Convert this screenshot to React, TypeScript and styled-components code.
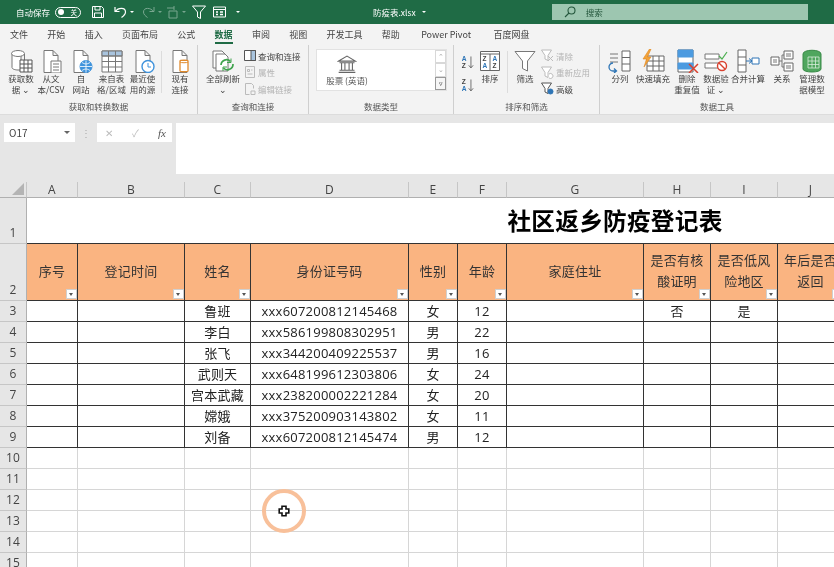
import React, { FC, ReactNode } from 'react';
import styled, { createGlobalStyle } from 'styled-components';

const FONT = `"Noto Sans CJK SC", "Noto Sans", sans-serif`;
const CELL_FONT = `"Open Sans", "Noto Sans CJK SC", sans-serif`;

const GlobalStyle = createGlobalStyle`
  html, body {
    margin: 0;
    padding: 0;
    background: #fff;
  }
  body {
    font-family: ${FONT};
  }
`;

const COLUMNS = [
  { name: 'A', width: 51 },
  { name: 'B', width: 107 },
  { name: 'C', width: 66 },
  { name: 'D', width: 158 },
  { name: 'E', width: 49 },
  { name: 'F', width: 49 },
  { name: 'G', width: 137 },
  { name: 'H', width: 67 },
  { name: 'I', width: 67 },
  { name: 'J', width: 66 },
];

const HEADERS = [
  '序号',
  '登记时间',
  '姓名',
  '身份证号码',
  '性别',
  '年龄',
  '家庭住址',
  '是否有核\n酸证明',
  '是否低风\n险地区',
  '年后是否\n返回',
];

const PEOPLE = [
  ['', '', '鲁班', 'xxx607200812145468', '女', '12', '', '否', '是', ''],
  ['', '', '李白', 'xxx586199808302951', '男', '22', '', '', '', ''],
  ['', '', '张飞', 'xxx344200409225537', '男', '16', '', '', '', ''],
  ['', '', '武则天', 'xxx648199612303806', '女', '24', '', '', '', ''],
  ['', '', '宫本武藏', 'xxx238200002221284', '女', '20', '', '', '', ''],
  ['', '', '嫦娥', 'xxx375200903143802', '女', '11', '', '', '', ''],
  ['', '', '刘备', 'xxx607200812145474', '男', '12', '', '', '', ''],
];

const TABS = ['文件', '开始', '插入', '页面布局', '公式', '数据', '审阅', '视图', '开发工具', '帮助', 'Power Pivot', '百度网盘'];

const Icon: FC<{ size?: number; children: ReactNode }> = ({ size = 24, children }) => (
  <svg width={size} height={size} viewBox="0 0 24 24" fill="none" stroke="#777" strokeWidth="1">
    {children}
  </svg>
);

const Doc = () => <path d="M5 1.500h9l5 5v17H5z M14 1.500v5h5" fill="#fff" />;

const DatabaseIcon = () => (
  <Icon>
    <path d="M3 4.500v14c0 1.500 3 2.500 6 2.500h3V4.500" fill="#fff" />
    <ellipse cx="9" cy="4.500" rx="6.500" ry="3" fill="#fff" />
    <path d="M15.500 5v6" />
    <path d="M11 11h12v12H11z" fill="#fff" stroke="#555" />
    <path d="M11 15h12M11 19h12M15 11v12M19 11v12" stroke="#555" />
  </Icon>
);

const TextFileIcon = () => (
  <Icon>
    <Doc />
    <path d="M12 12h10v12H12z" fill="#fff" />
    <path d="M14 15h6M14 18h6M14 21h6" />
  </Icon>
);

const WebIcon = () => (
  <Icon>
    <Doc />
    <circle cx="17" cy="17.500" r="6" fill="#3F93DC" stroke="#3F93DC" />
    <path d="M11 17.500h12M17 11.500v12M13 13.500c3 2 5 2 8 0M13 21.500c3-2 5-2 8 0" stroke="#fff" strokeWidth="0.800" />
  </Icon>
);

const TableIcon = () => (
  <Icon>
    <path d="M2 2h20v21H2z" fill="#fff" />
    <path d="M2 2h20v5H2z" fill="#A9C4DE" />
    <path d="M2 7h20M2 12.500h20M2 18h20M8.500 2v21M15.500 2v21" />
  </Icon>
);

const RecentIcon = () => (
  <Icon>
    <Doc />
    <circle cx="17" cy="17.500" r="6" fill="#fff" stroke="#3F93DC" strokeWidth="1.400" />
    <path d="M17 14v4h3" stroke="#3F93DC" />
  </Icon>
);

const ExistingIcon = () => (
  <Icon>
    <Doc />
    <path d="M12 12c0-1 8-1 8 0v10c0 1-8 1-8 0z" fill="#fff" stroke="#E08A2C" strokeWidth="1.300" />
    <path d="M12 13c1 1 7 1 8 0" stroke="#E08A2C" />
  </Icon>
);

const RefreshIcon = () => (
  <Icon>
    <path d="M2 2h9l3 3v14H2z" fill="#fff" />
    <path d="M5 5h9l3 3v14H5z" fill="#fff" />
    <path d="M10 16a5.500 5.500 0 0 1 9.500-3.500M22 15a5.500 5.500 0 0 1-9.500 4" stroke="#3FA34D" strokeWidth="1.700" />
    <path d="M20 9.500v4h-4M12 22v-4h4" stroke="#3FA34D" />
  </Icon>
);

const BankIcon = () => (
  <svg width="20" height="20" viewBox="0 0 24 24" fill="none" stroke="#666" strokeWidth="1.300">
    <path d="M2 8.500L12 2.500l10 6zM3 10.500h18M5.500 11v8M9.500 11v8M14.500 11v8M18.500 11v8M3 19.500h18M2 22h20" />
  </svg>
);

const SortLettersIcon: FC<{ flip?: boolean }> = ({ flip }) => (
  <svg width="14" height="14" viewBox="0 0 17 19" fill="none">
    <text x="0" y="8" fontSize="9" fontFamily="Liberation Sans, sans-serif" fontWeight="700" fill={flip ? '#444' : '#2E75B6'}>
      {flip ? 'Z' : 'A'}
    </text>
    <text x="0" y="18" fontSize="9" fontFamily="Liberation Sans, sans-serif" fontWeight="700" fill={flip ? '#2E75B6' : '#444'}>
      {flip ? 'A' : 'Z'}
    </text>
    <path d="M12.500 2v15M9.500 14l3 3.500 3-3.500" stroke="#444" />
  </svg>
);

const SortIcon = () => (
  <svg width="24" height="24" viewBox="0 0 24 24" fill="none" stroke="#666">
    <path d="M2.500 2.500h19v19h-19zM2.500 5h19M12 5v16.500" fill="#fff" />
    <text x="4.500" y="12" fontSize="6.500" fontWeight="700" fontFamily="Liberation Sans, sans-serif" stroke="none" fill="#444">Z</text>
    <text x="4.500" y="19" fontSize="6.500" fontWeight="700" fontFamily="Liberation Sans, sans-serif" stroke="none" fill="#2E75B6">A</text>
    <text x="14.500" y="12" fontSize="6.500" fontWeight="700" fontFamily="Liberation Sans, sans-serif" stroke="none" fill="#2E75B6">A</text>
    <text x="14.500" y="19" fontSize="6.500" fontWeight="700" fontFamily="Liberation Sans, sans-serif" stroke="none" fill="#444">Z</text>
  </svg>
);

const FunnelIcon = () => (
  <svg width="24" height="24" viewBox="0 0 24 24" fill="#fff" stroke="#777">
    <path d="M2 2.500h20L14.500 12v10l-5-2.500V12z" />
  </svg>
);

const SmallFunnel: FC<{ color?: string; children?: ReactNode }> = ({ color = '#bbb', children }) => (
  <svg width="13" height="13" viewBox="0 0 13 13" fill="#fff" stroke={color}>
    <path d="M.5 1h10L7 6.500v5l-3-1.500V6.500z" />
    {children}
  </svg>
);

const SplitIcon = () => (
  <Icon>
    <path d="M2 5h8M2 9h8M2 13h8" />
    <path d="M14 2h8v20h-8zM14 8.500h8M14 15h8" fill="#fff" stroke="#666" />
    <path d="M5 14a4 4 0 0 0 0 8h3M6 19.500l2.500 2.500-2.500 2" stroke="#2E75B6" strokeWidth="1.300" />
  </Icon>
);

const FlashFillIcon = () => (
  <Icon>
    <path d="M6 7h17v15H6zM6 12h17M6 17h17M12 7v15M18 7v15" fill="#fff" stroke="#666" />
    <path d="M8.500 0L2 10h3.500L3 18l7-10H6.500L10 0z" fill="#F2A33A" stroke="#E0861E" strokeWidth="0.600" />
  </Icon>
);

const RemoveDupIcon = () => (
  <Icon>
    <path d="M3 1h15v22H3z" fill="#fff" stroke="#666" />
    <path d="M3 1h15v7H3zM3 14h15v6H3z" fill="#4C9BE0" stroke="#4C9BE0" />
    <path d="M14 15l9 9M23 15l-9 9" stroke="#D9412F" strokeWidth="1.500" />
  </Icon>
);

const ValidateIcon = () => (
  <Icon>
    <path d="M1 5h14v5H1zM1 14h14v5H1z" fill="#fff" />
    <path d="M15 7l3 3 5-7" stroke="#4CAF50" strokeWidth="1.200" />
    <circle cx="18" cy="17" r="4.500" fill="#fff" stroke="#D9412F" strokeWidth="1.400" />
    <path d="M15 14l6 6" stroke="#D9412F" strokeWidth="1.400" />
  </Icon>
);

const ConsolidateIcon = () => (
  <Icon>
    <path d="M2 1h8v22H2zM2 8h8M2 16h8" fill="#fff" stroke="#666" />
    <path d="M10 12h6M13 9.500l3 2.500-3 2.500" stroke="#2E75B6" />
    <path d="M16 9h7v6h-7z" fill="#fff" stroke="#2E75B6" />
  </Icon>
);

const RelationIcon = () => (
  <Icon>
    <path d="M1 8h8v8H1zM14 2h9v8h-9zM14 14h9v8h-9z" fill="#fff" stroke="#666" />
    <path d="M3 11h4M3 13h4M16 5h5M16 7h5M16 17h5M16 19h5M9 12h3V6h2M12 12v6h2" />
  </Icon>
);

const DataModelIcon = () => (
  <Icon>
    <path d="M3 5c0-5 18-5 18 0v15c0 4-18 4-18 0z" fill="#4FA65E" stroke="#3A8A48" />
    <path d="M8 8h11v11H8zM8 12h11M8 15.500h11M12 8v11M15.500 8v11" stroke="#D8ECDB" strokeWidth="0.800" />
  </Icon>
);

const BIG_CONNECT = [
  { icon: <DatabaseIcon />, label: '获取数\n据 ⌄', width: 30 },
  { icon: <TextFileIcon />, label: '从文\n本/CSV', width: 30 },
  { icon: <WebIcon />, label: '自\n网站', width: 30 },
  { icon: <TableIcon />, label: '来自表\n格/区域', width: 31 },
  { icon: <RecentIcon />, label: '最近使\n用的源', width: 31 },
];

const TOOLS = [
  { icon: <SplitIcon />, label: '分列', width: 30 },
  { icon: <FlashFillIcon />, label: '快速填充', width: 36 },
  { icon: <RemoveDupIcon />, label: '删除\n重复值', width: 32 },
  { icon: <ValidateIcon />, label: '数据验\n证 ⌄', width: 26 },
  { icon: <ConsolidateIcon />, label: '合并计算', width: 38 },
  { icon: <RelationIcon />, label: '关系', width: 30 },
  { icon: <DataModelIcon />, label: '管理数\n据模型', width: 30 },
];

const App: FC = () => {
  const gridRows = Array.from({ length: 6 }, (_, i) => i + 10);

  return (
    <Page>
      <GlobalStyle />
      <TitleBar>
        <AutoSave>自动保存</AutoSave>
        <Toggle>
          <ToggleDot />
          <span>关</span>
        </Toggle>
        <QuickIcon $left={11}>
          <svg width="12" height="12" viewBox="0 0 12 12" fill="none" stroke="#fff">
            <path d="M.5.5h9l2 2v9H.5zM3 .5v3.500h5V.5M2.500 11.500V7h7v4.500" />
          </svg>
        </QuickIcon>
        <QuickIcon $left={10}>
          <svg width="13" height="12" viewBox="0 0 13 12" fill="none" stroke="#fff" strokeWidth="1.200">
            <path d="M1 1v4.500h4.500M1.500 5.500C4 1.500 11.500 1 11.500 6c0 2.500-2 4-4 5.500" />
          </svg>
        </QuickIcon>
        <Caret />
        <QuickIcon $left={8} $dim>
          <svg width="13" height="12" viewBox="0 0 13 12" fill="none" stroke="#fff">
            <path d="M12 1v4.500H7.500M11.500 5.500C9 1.500 1.500 1 1.500 6c0 2.500 2 4 4 5.500" />
          </svg>
        </QuickIcon>
        <Caret $dim />
        <QuickIcon $left={3} $dim>
          <svg width="14" height="14" viewBox="0 0 14 14" fill="none" stroke="#fff">
            <path d="M2 3h7M9 1v4M4 6h8v7H4z" />
          </svg>
        </QuickIcon>
        <Caret $dim />
        <QuickIcon $left={6}>
          <svg width="14" height="14" viewBox="0 0 14 14" fill="none" stroke="#fff">
            <path d="M.5 1h13L8.500 7v6.500l-3-1.500V7z" />
          </svg>
        </QuickIcon>
        <QuickIcon $left={7}>
          <svg width="13" height="12" viewBox="0 0 13 12" fill="none" stroke="#fff">
            <path d="M.5 1h12v10H.5zM.5 3.500h12" />
            <path d="M3 6h2M3 8.500h2M7 6h3M7 8.500h3" strokeWidth="1.500" />
          </svg>
        </QuickIcon>
        <Customize />
        <FileName>防疫表.xlsx</FileName>
        <FileCaret />
        <SearchBox>
          <svg width="12" height="12" viewBox="0 0 12 12" fill="none" stroke="#24563C" strokeWidth="1.100">
            <circle cx="7.500" cy="4.500" r="3.500" />
            <path d="M5 7L1 11" />
          </svg>
          <SearchText>搜索</SearchText>
        </SearchBox>
      </TitleBar>

      <TabBar>
        {TABS.map((tab) => (
          <Tab key={tab} $active={tab === '数据'} $latin={tab === 'Power Pivot'}>
            {tab}
          </Tab>
        ))}
      </TabBar>

      <Ribbon>
        <Group $width={198}>
          <GroupBody $pad={6}>
            {BIG_CONNECT.map((item) => (
              <BigButton key={item.label} $width={item.width}>
                {item.icon}
                <BigLabel>{item.label}</BigLabel>
              </BigButton>
            ))}
            <InnerSep $left={3} $right={3} />
            <BigButton $width={30}>
              <ExistingIcon />
              <BigLabel>{'现有\n连接'}</BigLabel>
            </BigButton>
          </GroupBody>
          <GroupLabel>获取和转换数据</GroupLabel>
        </Group>

        <Group $width={111}>
          <GroupBody $pad={6}>
            <BigButton $width={38}>
              <RefreshIcon />
              <BigLabel>{'全部刷新\n⌄'}</BigLabel>
            </BigButton>
            <SmallList $left={2}>
              <SmallButton>
                <svg width="12" height="11" viewBox="0 0 12 11" fill="#fff" stroke="#555">
                  <path d="M.5.500h11v10H.5z" />
                  <path d="M7 .5h4.500v10H7z" fill="#A9C4DE" />
                </svg>
                查询和连接
              </SmallButton>
              <SmallButton $disabled>
                <svg width="12" height="12" viewBox="0 0 12 12" fill="none" stroke="#bbb">
                  <path d="M1.500.5h9v11h-9zM3.500 3.500h2v2h-2zM3.500 8h5M7 4h1.500" />
                </svg>
                属性
              </SmallButton>
              <SmallButton $disabled>
                <svg width="12" height="12" viewBox="0 0 12 12" fill="none" stroke="#bbb">
                  <path d="M1.500.5h6l2 2v3M1.500.5v11h4M7 8h4v3.500H7z" />
                </svg>
                编辑链接
              </SmallButton>
            </SmallList>
          </GroupBody>
          <GroupLabel>查询和连接</GroupLabel>
        </Group>

        <Group $width={145}>
          <GroupBody $pad={7}>
            <DataTypeBox>
              <DataTypeItem>
                <BankIcon />
                <DataTypeText>股票 (英语)</DataTypeText>
              </DataTypeItem>
              <Scroller>
                <ScrollStep>⌃</ScrollStep>
                <ScrollStep>⌄</ScrollStep>
                <ScrollStep $strong>▿</ScrollStep>
              </Scroller>
            </DataTypeBox>
          </GroupBody>
          <GroupLabel>数据类型</GroupLabel>
        </Group>

        <Group $width={146}>
          <GroupBody $pad={5}>
            <SortColumn>
              <SortLettersIcon />
              <SortLettersIcon flip />
            </SortColumn>
            <BigButton $width={26}>
              <SortIcon />
              <BigLabel>排序</BigLabel>
            </BigButton>
            <InnerSep $left={4} $right={1} />
            <BigButton $width={32}>
              <FunnelIcon />
              <BigLabel>筛选</BigLabel>
            </BigButton>
            <SmallList $left={0}>
              <SmallButton $disabled>
                <SmallFunnel>
                  <path d="M7 7l5 5M12 7l-5 5" stroke="#bbb" />
                </SmallFunnel>
                清除
              </SmallButton>
              <SmallButton $disabled>
                <SmallFunnel>
                  <path d="M8 8a2.500 2.500 0 1 1 0 4" stroke="#bbb" />
                </SmallFunnel>
                重新应用
              </SmallButton>
              <SmallButton>
                <SmallFunnel color="#555">
                  <circle cx="9.500" cy="9.500" r="2.500" fill="#2E75B6" stroke="#2E75B6" />
                </SmallFunnel>
                高级
              </SmallButton>
            </SmallList>
          </GroupBody>
          <GroupLabel>排序和筛选</GroupLabel>
        </Group>

        <Group $width={234} $last>
          <GroupBody $pad={5}>
            {TOOLS.map((item) => (
              <BigButton key={item.label} $width={item.width}>
                {item.icon}
                <BigLabel>{item.label}</BigLabel>
              </BigButton>
            ))}
          </GroupBody>
          <GroupLabel>数据工具</GroupLabel>
        </Group>
      </Ribbon>

      <FormulaArea>
        <NameBox>
          <span>O17</span>
          <SmallCaret />
        </NameBox>
        <Dots>⋮</Dots>
        <FxBox>
          <FxMark>✕</FxMark>
          <FxMark>✓</FxMark>
          <FxItalic>fx</FxItalic>
        </FxBox>
        <FormulaInput />
      </FormulaArea>

      <Sheet>
        <CornerCell>
          <svg width="12" height="12" viewBox="0 0 12 12">
            <path d="M12 0v12H0z" fill="#B4B4B4" />
          </svg>
        </CornerCell>
        {COLUMNS.map((col) => (
          <ColumnHeader key={col.name}>{col.name}</ColumnHeader>
        ))}
        <ColumnHeader />

        <RowHeader>1</RowHeader>
        <TitleCell>社区返乡防疫登记表</TitleCell>

        <RowHeader>2</RowHeader>
        {HEADERS.map((text) => (
          <HeadCell key={text}>
            {text}
            <FilterButton />
          </HeadCell>
        ))}
        <Cell />

        {PEOPLE.map((person, rowIndex) => (
          <React.Fragment key={person[3]}>
            <RowHeader>{rowIndex + 3}</RowHeader>
            {person.map((value, colIndex) => (
              <Cell key={colIndex} $dark>
                {value}
              </Cell>
            ))}
            <Cell />
          </React.Fragment>
        ))}

        {gridRows.map((row) => (
          <React.Fragment key={row}>
            <RowHeader>{row}</RowHeader>
            {COLUMNS.map((col) => (
              <Cell key={col.name} />
            ))}
            <Cell />
          </React.Fragment>
        ))}
        <ClickHalo>
          <svg width="12" height="12" viewBox="0 0 15 15" fill="#fff" stroke="#111" strokeWidth="2">
            <path d="M5 1.500h5V5h3.500v5H10v3.500H5V10H1.500V5H5z" />
          </svg>
        </ClickHalo>
      </Sheet>
    </Page>
  );
};

export default App;

const Page = styled.div`
  position: relative;
  display: flex;
  width: 834px;
  height: 567px;
  overflow: hidden;
  flex-direction: column;
  background: #e6e6e6;
  font-family: ${FONT};
  color: #333;
  filter: blur(0.3px);
`;

const TitleBar = styled.div`
  display: flex;
  height: 24px;
  flex: none;
  align-items: center;
  padding-left: 16px;
  background: #1f6b45;
  color: #fff;
`;

const AutoSave = styled.span`
  width: 34px;
  font-size: 8.5px;
  white-space: nowrap;
`;

const Toggle = styled.div`
  display: flex;
  width: 26px;
  height: 11px;
  box-sizing: border-box;
  margin-left: 5px;
  align-items: center;
  justify-content: space-between;
  padding: 0 3px 0 2px;
  border: 1px solid #fff;
  border-radius: 6px;
  font-size: 6.5px;
  line-height: 1;
`;

const ToggleDot = styled.i`
  width: 6px;
  height: 6px;
  border-radius: 50%;
  background: #fff;
`;

const QuickIcon = styled.span<{ $left: number; $dim?: boolean }>`
  display: flex;
  margin-left: ${(p) => p.$left}px;
  opacity: ${(p) => (p.$dim ? 0.4 : 1)};
`;

const Caret = styled.i<{ $dim?: boolean }>`
  width: 0;
  height: 0;
  margin-left: 3px;
  border-top: 2.5px solid #fff;
  border-right: 2.5px solid transparent;
  border-left: 2.5px solid transparent;
  opacity: ${(p) => (p.$dim ? 0.4 : 1)};
`;

const Customize = styled(Caret)`
  margin-left: 10px;
  box-shadow: 0 -2px 0 -1px #fff;
`;

const FileName = styled.span`
  margin-left: 133px;
  font-size: 8.5px;
  white-space: nowrap;
`;

const FileCaret = styled(Caret)`
  margin-left: 6px;
`;

const SearchBox = styled.div`
  display: flex;
  width: 256px;
  height: 16px;
  box-sizing: border-box;
  margin-left: 126px;
  align-items: center;
  padding-left: 12px;
  background: #9dc6b0;
`;

const SearchText = styled.span`
  margin-left: 10px;
  color: #24563c;
  font-size: 8.5px;
`;

const TabBar = styled.div`
  display: flex;
  height: 21px;
  flex: none;
  align-items: center;
  gap: 19.3px;
  padding-left: 10px;
  background: #f3f3f3;
`;

const Tab = styled.span<{ $active?: boolean; $latin?: boolean }>`
  position: relative;
  margin: ${(p) => (p.$latin ? '0 3px 0 2px' : '0')};
  color: ${(p) => (p.$active ? '#1f6b45' : '#444')};
  font-size: 9px;
  font-weight: ${(p) => (p.$active ? 700 : 400)};
  white-space: nowrap;

  ${(p) =>
    p.$active &&
    `
    &::after {
      content: '';
      position: absolute;
      right: 0;
      bottom: -3px;
      left: 0;
      height: 2px;
      background: #1f6b45;
    }
  `}
`;

const Ribbon = styled.div`
  display: flex;
  height: 70px;
  box-sizing: border-box;
  flex: none;
  background: #f3f3f3;
  border-bottom: 1px solid #dcdcdc;
  box-shadow: 0 1px 1px rgba(0, 0, 0, 0.06);
`;

const Group = styled.div<{ $width: number; $last?: boolean }>`
  display: flex;
  width: ${(p) => p.$width}px;
  box-sizing: border-box;
  flex-direction: column;
  padding-bottom: 1px;
  border-right: ${(p) => (p.$last ? 'none' : '1px solid #cfcfcf')};
`;

const GroupBody = styled.div<{ $pad: number }>`
  display: flex;
  flex: 1;
  padding: 4px 0 0 ${(p) => p.$pad}px;
`;

const GroupLabel = styled.div`
  color: #555;
  font-size: 8.5px;
  line-height: 13px;
  text-align: center;
`;

const BigButton = styled.div<{ $width: number }>`
  display: flex;
  width: ${(p) => p.$width}px;
  flex: none;
  flex-direction: column;
  align-items: center;
  gap: 0;
`;

const BigLabel = styled.div`
  color: #444;
  font-size: 8.5px;
  line-height: 11px;
  text-align: center;
  white-space: pre;
`;

const InnerSep = styled.div<{ $left: number; $right: number }>`
  width: 1px;
  height: 42px;
  margin: 2px ${(p) => p.$right}px 0 ${(p) => p.$left}px;
  background: #dcdcdc;
`;

const SmallList = styled.div<{ $left: number }>`
  display: flex;
  margin: -1px 0 0 ${(p) => p.$left}px;
  flex-direction: column;
  gap: 1.7px;
`;

const SmallButton = styled.div<{ $disabled?: boolean }>`
  display: flex;
  height: 15px;
  align-items: center;
  gap: 2px;
  color: ${(p) => (p.$disabled ? '#b4b4b4' : '#444')};
  font-size: 8.5px;
  white-space: nowrap;
`;

const DataTypeBox = styled.div`
  display: flex;
  width: 131px;
  height: 42px;
  box-sizing: border-box;
  justify-content: space-between;
  background: #fff;
  border: 1px solid #e2e2e2;
`;

const DataTypeItem = styled.div`
  display: flex;
  width: 60px;
  flex-direction: column;
  align-items: center;
  padding-top: 4px;
`;

const DataTypeText = styled.span`
  color: #555;
  font-size: 8.5px;
  line-height: 12px;
  white-space: nowrap;
`;

const Scroller = styled.div`
  display: flex;
  width: 11px;
  flex-direction: column;
`;

const ScrollStep = styled.div<{ $strong?: boolean }>`
  display: flex;
  flex: 1;
  align-items: center;
  justify-content: center;
  background: ${(p) => (p.$strong ? '#f6f6f6' : '#fff')};
  border: 1px solid ${(p) => (p.$strong ? '#999' : '#d8d8d8')};
  color: ${(p) => (p.$strong ? '#333' : '#aaa')};
  font-size: 7px;
  line-height: 1;
`;

const SortColumn = styled.div`
  display: flex;
  width: 18px;
  flex-direction: column;
  align-items: center;
  gap: 9px;
  padding-top: 6px;
`;

const FormulaArea = styled.div`
  display: flex;
  height: 67px;
  box-sizing: border-box;
  flex: none;
  align-items: flex-start;
  padding: 8px 0 0 4px;
  background: #e6e6e6;
`;

const NameBox = styled.div`
  display: flex;
  width: 71px;
  height: 19px;
  box-sizing: border-box;
  align-items: center;
  justify-content: space-between;
  padding: 0 5px;
  background: #fff;
  color: #444;
  font-size: 10px;
`;

const SmallCaret = styled.i`
  width: 0;
  height: 0;
  border-top: 3px solid #666;
  border-right: 3px solid transparent;
  border-left: 3px solid transparent;
`;

const Dots = styled.span`
  width: 22px;
  color: #aaa;
  font-size: 10px;
  line-height: 19px;
  text-align: center;
`;

const FxBox = styled.div`
  display: flex;
  width: 75px;
  height: 19px;
  box-sizing: border-box;
  align-items: center;
  justify-content: space-between;
  padding: 0 6px 0 8px;
  background: #fff;
`;

const FxMark = styled.span`
  color: #bbb;
  font-size: 10px;
`;

const FxItalic = styled.span`
  color: #555;
  font-family: 'Liberation Serif', serif;
  font-size: 11px;
  font-style: italic;
`;

const FormulaInput = styled.div`
  width: 658px;
  height: 51px;
  margin-left: 4px;
  background: #fff;
`;

const Sheet = styled.div`
  position: relative;
  display: grid;
  width: 1203px;
  flex: 1;
  align-content: start;
  grid-template-columns: 27px ${COLUMNS.map((c) => `${c.width}px`).join(' ')} 359px;
  grid-template-rows: 16px 46px 57px repeat(13, 21px);
  background: #fff;
  font-family: ${CELL_FONT};
  font-size: 13px;
  letter-spacing: 0.22px;
`;

const CornerCell = styled.div`
  display: flex;
  align-items: flex-end;
  justify-content: flex-end;
  padding: 0 2px 2px 0;
  background: #e6e6e6;
  border-right: 1px solid #c6c6c6;
  border-bottom: 1px solid #b0b0b0;
`;

const ColumnHeader = styled.div`
  display: flex;
  align-items: center;
  justify-content: center;
  background: #e6e6e6;
  border-right: 1px solid #c6c6c6;
  border-bottom: 1px solid #b0b0b0;
  color: #444;
  font-size: 12px;
  line-height: 1;
`;

const RowHeader = styled.div`
  display: flex;
  align-items: flex-end;
  justify-content: center;
  padding-bottom: 2px;
  background: #e6e6e6;
  border-right: 1px solid #b0b0b0;
  border-bottom: 1px solid #c6c6c6;
  color: #444;
  font-size: 12px;
  line-height: 16px;
`;

const TitleCell = styled.div`
  display: flex;
  grid-column: 2 / -1;
  align-items: center;
  justify-content: center;
  border-bottom: 1px solid #333;
  color: #000;
  font-family: ${FONT};
  font-size: 23.7px;
  font-weight: 700;
  line-height: 1;
`;

const HeadCell = styled.div`
  position: relative;
  display: flex;
  align-items: center;
  justify-content: center;
  padding-bottom: 2px;
  background: #fab481;
  border-right: 1px solid #333;
  border-bottom: 1px solid #333;
  color: #333;
  line-height: 21px;
  text-align: center;
  white-space: pre;
`;

const FilterButton = styled.i`
  position: absolute;
  right: 0;
  bottom: 1px;
  width: 11px;
  height: 10px;
  box-sizing: border-box;
  background: #fff;
  border: 1px solid #d0d0d0;

  &::after {
    content: '';
    position: absolute;
    top: 3px;
    left: 2px;
    border-top: 3px solid #555;
    border-right: 2.5px solid transparent;
    border-left: 2.5px solid transparent;
  }
`;

const Cell = styled.div<{ $dark?: boolean }>`
  display: flex;
  align-items: center;
  justify-content: center;
  border-right: 1px solid ${(p) => (p.$dark ? '#333' : '#d6d6d6')};
  border-bottom: 1px solid ${(p) => (p.$dark ? '#333' : '#d6d6d6')};
  color: #222;
  line-height: 1;
  white-space: nowrap;
`;

const ClickHalo = styled.div`
  position: absolute;
  top: 307px;
  left: 262px;
  display: flex;
  width: 44px;
  height: 44px;
  box-sizing: border-box;
  align-items: center;
  justify-content: center;
  border: 4px solid #f8c09a;
  border-radius: 50%;
`;
